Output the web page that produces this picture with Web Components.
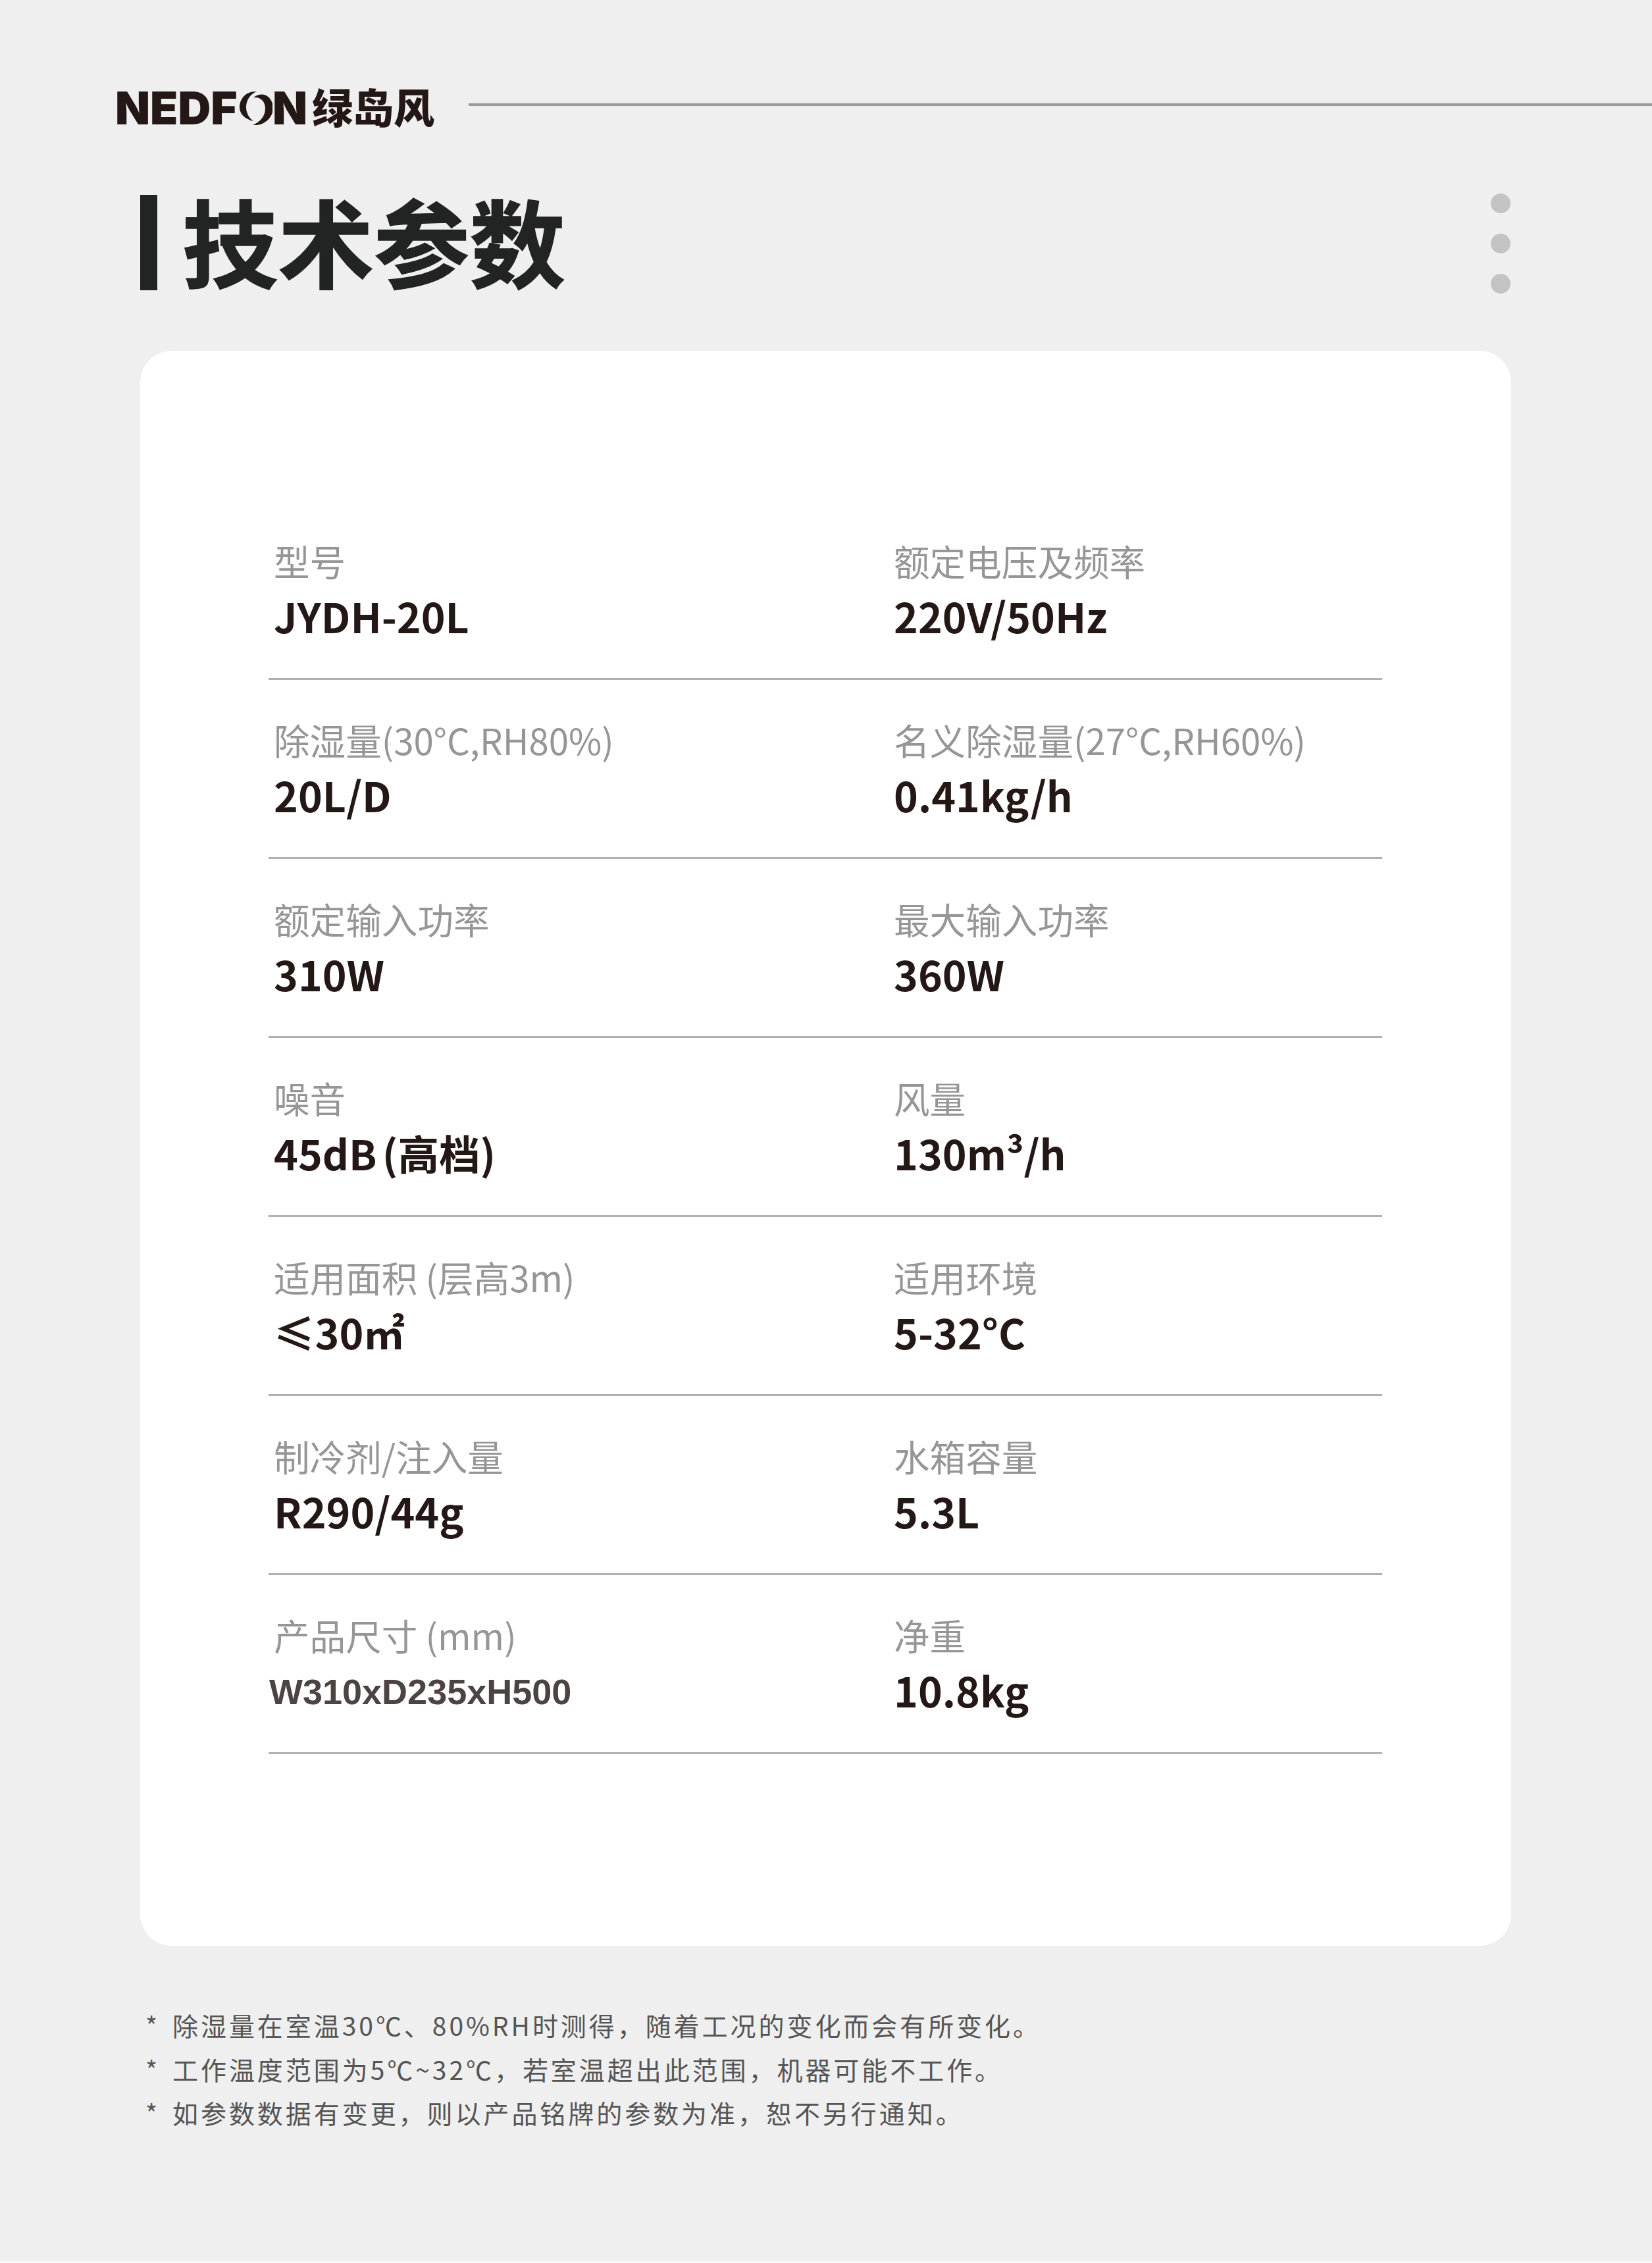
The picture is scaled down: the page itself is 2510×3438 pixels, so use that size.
<!DOCTYPE html>
<html lang="zh-CN">
<head>
<meta charset="utf-8">
<title>技术参数</title>
<style>
html, body { margin: 0; background: #efefef; }
body { font-family: "Noto Sans CJK SC", "Noto Sans", sans-serif; }
</style>
</head>
<body>
<spec-page>
  <page-header slot="header"></page-header>
  <section-title slot="title">技术参数</section-title>
  <spec-card slot="card">
    <spec-row>
      <spec-item label="型号">JYDH-20L</spec-item>
      <spec-item label="额定电压及频率">220V/50Hz</spec-item>
    </spec-row>
    <spec-row>
      <spec-item label="除湿量(30°C,RH80%)">20L/D</spec-item>
      <spec-item label="名义除湿量(27°C,RH60%)">0.41kg/h</spec-item>
    </spec-row>
    <spec-row>
      <spec-item label="额定输入功率">310W</spec-item>
      <spec-item label="最大输入功率">360W</spec-item>
    </spec-row>
    <spec-row>
      <spec-item label="噪音">45dB (高档)</spec-item>
      <spec-item label="风量">130m³/h</spec-item>
    </spec-row>
    <spec-row>
      <spec-item label="适用面积 (层高3m)">≤30㎡</spec-item>
      <spec-item label="适用环境">5-32°C</spec-item>
    </spec-row>
    <spec-row>
      <spec-item label="制冷剂/注入量">R290/44g</spec-item>
      <spec-item label="水箱容量">5.3L</spec-item>
    </spec-row>
    <spec-row>
      <spec-item label="产品尺寸 (mm)" plain>W310xD235xH500</spec-item>
      <spec-item label="净重">10.8kg</spec-item>
    </spec-row>
  </spec-card>
  <foot-notes slot="notes">
    <p>除湿量在室温30℃、80%RH时测得，随着工况的变化而会有所变化。</p>
    <p>工作温度范围为5℃~32℃，若室温超出此范围，机器可能不工作。</p>
    <p>如参数数据有变更，则以产品铭牌的参数为准，恕不另行通知。</p>
  </foot-notes>
</spec-page>

<script>
class SpecPage extends HTMLElement {
  constructor() {
    super();
    this.attachShadow({ mode: "open" }).innerHTML = `<style>
:host { display: flex; flex-direction: column; width: 2510px; height: 3438px; box-sizing: border-box; overflow: hidden; border-bottom: 3px solid #f8f8f8; }
</style>
<slot name="header"></slot>
<slot name="title"></slot>
<slot name="card"></slot>
<slot name="notes"></slot>`;
  }
}

class PageHeader extends HTMLElement {
  constructor() {
    super();
    this.attachShadow({ mode: "open" }).innerHTML = `<style>
:host { display: flex; align-items: center; height: 57px; margin-top: 136px; padding-left: 175px; gap: 52px; }
.logo { display: flex; align-items: center; width: 485px; color: #231815; white-space: nowrap; flex: none; }
.latin { font: 900 69px/57px Inter, "Liberation Sans", sans-serif; }
.o { position: relative; display: inline-block; }
.o span { color: transparent; }
.o svg { position: absolute; left: 3px; top: 2px; width: 50px; height: 52px; }
.cn { font: 900 62px/57px "Noto Sans CJK SC", sans-serif; margin: -6px 0 0 auto; }
.line { flex: 1; height: 4px; margin-top: -12px; background: #9b9b9b; }
</style>
<div class="logo"><span class="latin">NEDF<span class="o"><span>O</span><svg viewBox="0 0 50 52" fill="#231815"><path d="M26 1C10 0 0 12 0 25C0 35 8 43 21 46C14 41 10 33 10 25C10 14 16 5 26 1Z"/><path d="M21 10C38 -2 51 12 51 26C51 41 36 54 20 52C32 47 39 38 39 27C39 17 33 9 21 10Z"/></svg></span>N</span><span class="cn">绿岛风</span></div>
<div class="line"></div>`;
  }
}

class SectionTitle extends HTMLElement {
  constructor() {
    super();
    this.attachShadow({ mode: "open" }).innerHTML = `<style>
:host { display: flex; align-items: center; height: 145px; margin-top: 103px; padding: 0 215px 0 213px; color: #222423; }
.bar { width: 26px; height: 145px; background: #222423; flex: none; }
.text { font: 700 145.5px/135px "Noto Sans CJK SC", sans-serif; -webkit-text-stroke: 1.5px #222423; margin: 0 0 10px 38px; white-space: nowrap; flex: 1; }
.dots { display: flex; flex-direction: column; gap: 31px; margin-top: 2px; flex: none; }
.dots i { display: block; width: 30px; height: 30px; border-radius: 50%; background: #c3c3c3; }
</style>
<div class="bar"></div><div class="text"><slot></slot></div>
<div class="dots"><i></i><i></i><i></i></div>`;
  }
}

class SpecCard extends HTMLElement {
  constructor() {
    super();
    this.attachShadow({ mode: "open" }).innerHTML = `<style>
:host { display: block; box-sizing: border-box; width: 2083px; height: 2423px; margin: 92px 0 0 213px; padding: 228px 196px 0 195px; background: #fff; border-radius: 48px; }
</style><slot></slot>`;
  }
}

class SpecRow extends HTMLElement {
  constructor() {
    super();
    this.attachShadow({ mode: "open" }).innerHTML = `<style>
:host { display: grid; grid-template-columns: 942px 1fr; box-sizing: border-box; height: 272px; padding: 49px 0 0 8px; border-bottom: 3px solid #b0b0b0; }
</style><slot></slot>`;
  }
}

class SpecItem extends HTMLElement {
  constructor() {
    super();
    this.attachShadow({ mode: "open" }).innerHTML = `<style>
:host { display: block; }
.label { font: 400 54.6px/83px "Noto Sans CJK SC", sans-serif; color: #969696; white-space: nowrap; }
.value { font: 700 62.5px/83px "Noto Sans CJK SC", sans-serif; color: #231815; word-spacing: -6px; white-space: nowrap; }
:host([plain]) .value { font: 700 54px/83px "Liberation Sans", sans-serif; color: #4c4442; margin: 4px 0 0 -7px; word-spacing: 0; }
</style>
<div class="label"></div>
<div class="value"><slot></slot></div>`;
    this.shadowRoot.querySelector(".label").textContent = this.getAttribute("label");
  }
}

class FootNotes extends HTMLElement {
  constructor() {
    super();
    this.attachShadow({ mode: "open" }).innerHTML = `<style>
:host { display: block; margin: 87px 0 0 221px; font: 400 39px/66.5px "Noto Sans CJK SC", sans-serif; color: #555; letter-spacing: 3.95px; white-space: nowrap; }
::slotted(p) { margin: 0; padding-left: 41px; text-indent: -41px; }
::slotted(p)::before { content: "*"; display: inline-block; width: 41px; text-indent: 0; }
</style><slot></slot>`;
  }
}

customElements.define("spec-page", SpecPage);
customElements.define("page-header", PageHeader);
customElements.define("section-title", SectionTitle);
customElements.define("spec-card", SpecCard);
customElements.define("spec-row", SpecRow);
customElements.define("spec-item", SpecItem);
customElements.define("foot-notes", FootNotes);
</script>
</body>
</html>
